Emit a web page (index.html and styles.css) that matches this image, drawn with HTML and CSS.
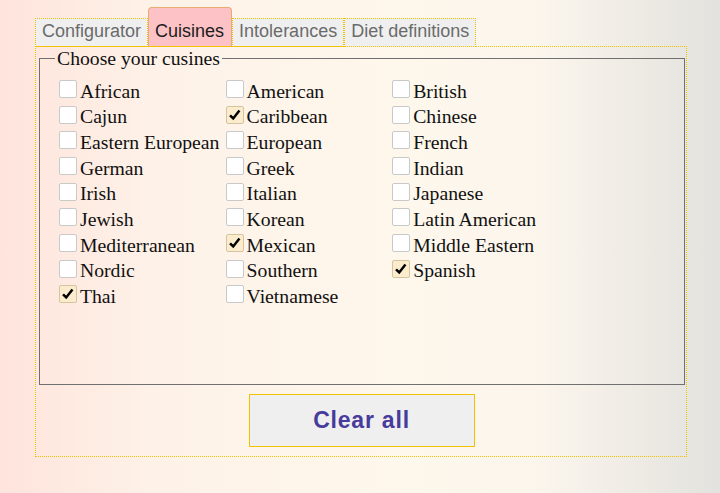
FILE: index.html
```html
<!DOCTYPE html>
<html lang="en">
<head>
<meta charset="utf-8">
<title>Cuisines</title>
<link rel="stylesheet" href="styles.css">
</head>
<body>
<div class="page">
  <div class="tabs">
    <div class="tab tab-solid">Configurator</div>
    <div class="tab tab-active">Cuisines</div>
    <div class="tab tab-solid">Intolerances</div>
    <div class="tab">Diet definitions</div>
  </div>
  <div class="panel">
    <fieldset class="cuisines">
      <legend>Choose your cusines</legend>
      <div class="grid">
        <label class="item"><input type="checkbox"><span>African</span></label>
        <label class="item"><input type="checkbox"><span>American</span></label>
        <label class="item"><input type="checkbox"><span>British</span></label>
        <label class="item"><input type="checkbox"><span>Cajun</span></label>
        <label class="item"><input type="checkbox" checked><span>Caribbean</span></label>
        <label class="item"><input type="checkbox"><span>Chinese</span></label>
        <label class="item"><input type="checkbox"><span>Eastern European</span></label>
        <label class="item"><input type="checkbox"><span>European</span></label>
        <label class="item"><input type="checkbox"><span>French</span></label>
        <label class="item"><input type="checkbox"><span>German</span></label>
        <label class="item"><input type="checkbox"><span>Greek</span></label>
        <label class="item"><input type="checkbox"><span>Indian</span></label>
        <label class="item"><input type="checkbox"><span>Irish</span></label>
        <label class="item"><input type="checkbox"><span>Italian</span></label>
        <label class="item"><input type="checkbox"><span>Japanese</span></label>
        <label class="item"><input type="checkbox"><span>Jewish</span></label>
        <label class="item"><input type="checkbox"><span>Korean</span></label>
        <label class="item"><input type="checkbox"><span>Latin American</span></label>
        <label class="item"><input type="checkbox"><span>Mediterranean</span></label>
        <label class="item"><input type="checkbox" checked><span>Mexican</span></label>
        <label class="item"><input type="checkbox"><span>Middle Eastern</span></label>
        <label class="item"><input type="checkbox"><span>Nordic</span></label>
        <label class="item"><input type="checkbox"><span>Southern</span></label>
        <label class="item"><input type="checkbox" checked><span>Spanish</span></label>
        <label class="item"><input type="checkbox" checked><span>Thai</span></label>
        <label class="item"><input type="checkbox"><span>Vietnamese</span></label>
      </div>
    </fieldset>
    <button class="clear" type="button">Clear all</button>
  </div>
</div>
</body>
</html>
```

FILE: styles.css
```css
html, body {
  margin: 0;
  height: 100%;
}
body {
  background: linear-gradient(90deg, #fee4dc 0%, #fef2e8 22%, #fef7ec 55%, #fbf5ec 75%, #e3e2de 100%);
  font-family: "Liberation Serif", "Times New Roman", serif;
}
.page {
  padding: 7px 0 0 35px;
}
.tabs {
  display: flex;
  align-items: flex-end;
  margin-bottom: -1px;
  position: relative;
  z-index: 1;
}
.tab {
  font-family: "Liberation Sans", Arial, sans-serif;
  font-size: 18px;
  line-height: 20.7px;
  color: #6b6b6b;
  background: #efefef;
  border: 1px dotted #f2c200;
  padding: 2px 6px 4px;
}
.tab-solid {
  border-bottom: 1px solid #f2c200;
}
.tab-active {
  background: #fcc2c6;
  color: #1c1c1c;
  border: 1px solid #e8ab72;
  border-bottom: 1px solid #f2c200;
  border-radius: 4px 4px 0 0;
  padding-top: 13px;
  padding-right: 7px;
}
.panel {
  box-sizing: border-box;
  width: 652px;
  border: 1px dotted #f2c200;
  padding: 0 1px 9px 3px;
  display: flex;
  flex-direction: column;
  align-items: center;
}
.cuisines {
  box-sizing: border-box;
  align-self: stretch;
  height: 338px;
  margin: 0;
  border: 1px solid #707070;
  padding: 9.8px 15px 0;
  font-size: 19.7px;
  color: #111;
}
.cuisines legend {
  padding: 0 2px;
}
.grid {
  display: grid;
  grid-template-columns: repeat(3, 166.6px);
  grid-auto-rows: 25.7px;
}
.item {
  display: flex;
  align-items: flex-start;
  white-space: nowrap;
}
.item input {
  appearance: none;
  -webkit-appearance: none;
  box-sizing: border-box;
  width: 18px;
  height: 18px;
  margin: 0.4px 3px 0 4px;
  border: 1px solid #c9c9c9;
  border-radius: 2px;
  background: #fff;
  flex: none;
}
.item input:checked {
  background: #fbecce url("data:image/svg+xml,%3Csvg xmlns='http://www.w3.org/2000/svg' viewBox='0 0 18 18'%3E%3Cpath d='M3.4 9.3 L7 12.9 L14 4' fill='none' stroke='%23000' stroke-width='2.8'/%3E%3C/svg%3E") center / 100% 100% no-repeat;
  border-color: #d6c59c;
}
.clear {
  box-sizing: border-box;
  width: 226px;
  height: 53px;
  margin-top: 9px;
  margin-left: -1px;
  background: #efefef;
  border: 1px solid #f2c200;
  font-family: "Liberation Sans", Arial, sans-serif;
  font-weight: bold;
  font-size: 23px;
  letter-spacing: 0.8px;
  color: #473b9b;
  padding: 0;
}
```
